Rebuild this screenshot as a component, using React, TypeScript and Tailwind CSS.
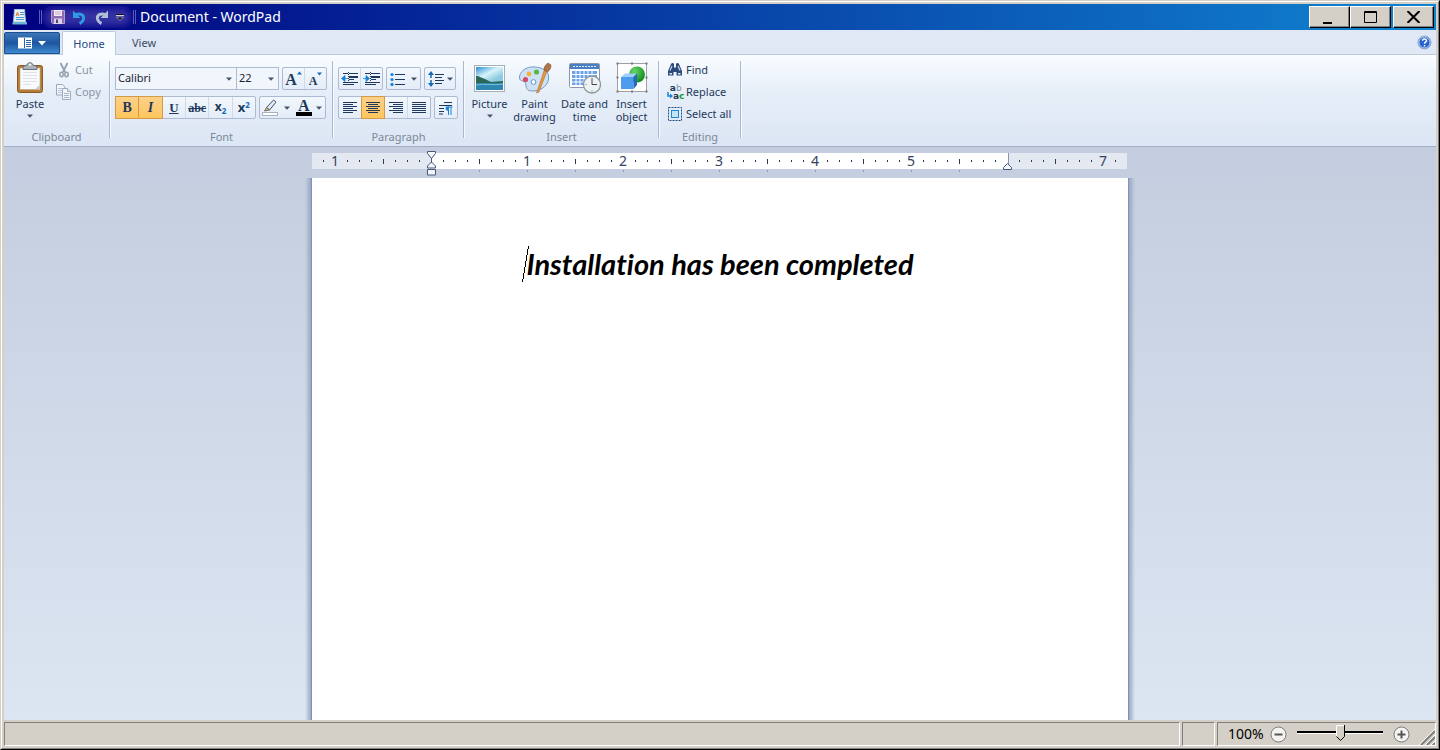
import { useState, type ReactNode } from "react";
import clsx from "clsx";

function Arrow({ className }: { className?: string }) {
  return (
    <svg width="6" height="4" viewBox="0 0 6 4" className={clsx("shrink-0", className)}>
      <path d="M0 0.5h6L3 3.8z" fill="currentColor" />
    </svg>
  );
}

function Separator() {
  return <div className="mt-1.5 h-[77px] w-0.5 shrink-0 border-l border-[#a9b8cf] bg-[#f6fafe]" />;
}

function Group({ label, className, children }: { label: string; className: string; children: ReactNode }) {
  return (
    <>
      <section aria-label={label} className={clsx("flex shrink-0 flex-col pb-px", className)}>
        <div className="h-[74px]">{children}</div>
        <div className="h-4 text-center text-[11px] leading-4 text-[#7b8799]">{label}</div>
      </section>
      <Separator />
    </>
  );
}

function ButtonBar({ className, children }: { className: string; children: ReactNode }) {
  return (
    <div
      className={clsx(
        "flex h-[23px] shrink-0 rounded-xs border border-[#acbad2] bg-linear-to-b from-[#f3f8fd] to-[#e3ecf8]",
        className,
      )}
    >
      {children}
    </div>
  );
}

function Tool({
  label,
  active,
  divided,
  className = "flex-1",
  onClick,
  children,
}: {
  label: string;
  active?: boolean;
  divided?: boolean;
  className?: string;
  onClick?: () => void;
  children: ReactNode;
}) {
  return (
    <button
      type="button"
      aria-label={label}
      aria-pressed={active}
      title={label}
      onClick={onClick}
      className={clsx(
        "flex items-center justify-center text-[#1e395b]",
        active && "-my-px border border-[#d49a45] bg-linear-to-b from-[#fcd08a] to-[#ffc65c]",
        divided && !active && "border-r border-[#cfd9e8]",
        className,
      )}
    >
      {children}
    </button>
  );
}

function LargeButton({
  icon,
  lines,
  menu,
  className,
}: {
  icon: ReactNode;
  lines: string[];
  menu?: boolean;
  className: string;
}) {
  return (
    <button type="button" className={clsx("flex flex-col items-center pt-[7px] text-[11px] leading-[13px]", className)}>
      {icon}
      <span className="mt-[3px] flex flex-col items-center whitespace-nowrap">
        {lines.map((line) => (
          <span key={line}>{line}</span>
        ))}
      </span>
      {menu ? <Arrow className="mt-1 text-[#44546a]" /> : null}
    </button>
  );
}

function SmallButton({ icon, label, disabled }: { icon: ReactNode; label: string; disabled?: boolean }) {
  return (
    <button
      type="button"
      disabled={disabled}
      className="flex h-[22px] items-center gap-[3px] text-[11px] whitespace-nowrap disabled:text-[#8a94a3]"
    >
      {icon}
      {label}
    </button>
  );
}

function AppIcon() {
  return (
    <svg width="16" height="16" viewBox="0 0 16 16" className="shrink-0">
      <path d="M2.5 0.5h10l1 12.5h-12z" fill="#e9f3fa" stroke="#9fc4dc" />
      <path d="M0.5 13h14.5v2.5H0.5z" fill="#6cb4d6" />
      <path d="M4 7l1.5-4L7 7M4.5 5.7h2" stroke="#dd7b35" fill="none" />
      <path d="M8 3.5h4M8 5.5h4M4 8.5h8M4 10.5h8" stroke="#4f97c4" />
    </svg>
  );
}

function SaveIcon() {
  return (
    <svg width="14" height="14" viewBox="0 0 14 14">
      <path d="M0.5 0.5h13v13h-12l-1-1z" fill="#8d6bb5" stroke="#b79ad2" />
      <path d="M3 0h8v6H3z" fill="#f4edf5" />
      <path d="M4 2h6M4 4h6" stroke="#c9a9c4" />
      <path d="M3 8.5h8V14H3z" fill="#dcd3ea" />
      <path d="M5 9.5h2V13H5z" fill="#4e4576" />
    </svg>
  );
}

function UndoIcon() {
  return (
    <svg width="15" height="15" viewBox="0 0 15 15">
      <path d="M2.5 5.500C7 2.500 12.500 4.500 11.500 9c-.5 2-2 3.700-4 4.500" stroke="#2f9ae6" strokeWidth="3" fill="none" />
      <path d="M1 0.500v7.500h7.500z" fill="#2f9ae6" />
    </svg>
  );
}

function RedoIcon() {
  return (
    <svg width="15" height="15" viewBox="0 0 15 15">
      <path d="M12.500 5.500C8 2.500 2.500 4.500 3.500 9c.5 2 2 3.700 4 4.500" stroke="#b3c0d6" strokeWidth="3" fill="none" />
      <path d="M14 0.500v7.500H6.500z" fill="#b3c0d6" />
    </svg>
  );
}

function PasteIcon() {
  return (
    <svg width="28" height="32" viewBox="0 0 28 32">
      <rect x="1.5" y="3.5" width="25" height="27" rx="2" fill="#b67c36" stroke="#8c5a20" />
      <path d="M4 6h20v21.5H4z" fill="#f8fafb" stroke="#b9a888" strokeWidth="0.6" />
      <path d="M7 10.5h14M7 13.5h14M7 16.5h14M7 19.5h14M7 22.5h8" stroke="#dde3e8" />
      <path d="M19 27.5l5-5v5z" fill="#c7ccd1" />
      <path d="M7 7.5V4.500l4-1.500c.5-3 5.500-3 6 0l4 1.500v3z" fill="#aab3ba" stroke="#66727c" />
      <circle cx="14" cy="2.8" r="1.2" fill="#eef2f4" />
    </svg>
  );
}

function CutIcon() {
  return (
    <svg width="16" height="16" viewBox="0 0 16 16" fill="none" stroke="#93a0b0">
      <path d="M4.5 1l4.500 9M11.500 1L7 10" strokeWidth="1.8" />
      <ellipse cx="5.5" cy="12.5" rx="1.7" ry="2.2" strokeWidth="1.5" />
      <ellipse cx="10.5" cy="12.5" rx="1.7" ry="2.2" strokeWidth="1.5" />
    </svg>
  );
}

function CopyIcon() {
  return (
    <svg width="16" height="16" viewBox="0 0 16 16" fill="#f2f6fb" stroke="#9aa9bd">
      <path d="M0.5 0.5h6l2.500 2.500v8H0.500z" />
      <path d="M2 4.5h4M2 6.5h4M2 8.5h4" stroke="#b9c5d4" />
      <path d="M6.5 4.5h5l3 3v8h-8z" />
      <path d="M11.5 4.5v3h3M8 9.5h5M8 11.5h5M8 13.5h5" stroke="#a5b3c5" />
    </svg>
  );
}

function GrowFontIcon({ shrink }: { shrink?: boolean }) {
  return (
    <span className="flex items-start">
      <span className={clsx("font-['Liberation_Serif',serif] leading-none font-bold", shrink ? "pt-1 text-xs" : "pt-0.5 text-base")}>
        A
      </span>
      <svg width="5" height="4" viewBox="0 0 5 4" className="mt-px">
        <path d={shrink ? "M0 0.5h5L2.5 3.5z" : "M0 3.5h5L2.5 0.5z"} fill="#1769b8" />
      </svg>
    </span>
  );
}

function IndentIcon({ increase }: { increase?: boolean }) {
  return (
    <svg width="17" height="14" viewBox="0 0 17 14">
      <path d="M2 1.5h5M8 1.5h9M8 4.5h9M8 7.5h5M2 10.5h5M8 10.5h9M2 12.5h5M8 12.5h5" stroke="#1e395b" />
      <path d="M8 5.5h9" stroke="#1e395b" />
      <path d="M7.5 0v14" stroke="#1e395b" strokeDasharray="1 1" />
      <path
        d={increase ? "M0 6.5h3M3 3.5l3.5 3L3 9.5z" : "M3 6.5h4M4 3.5L0.5 6.5 4 9.5z"}
        fill="#1683d8"
        stroke="#1683d8"
        strokeWidth="0.8"
      />
    </svg>
  );
}

function BulletsIcon() {
  return (
    <svg width="15" height="14" viewBox="0 0 15 14">
      <g fill="#1683d8">
        <circle cx="2" cy="2.5" r="1.6" />
        <circle cx="2" cy="7.5" r="1.6" />
        <circle cx="2" cy="12.400" r="1.6" />
      </g>
      <path d="M5 2.5h10M5 7.5h10M5 12.5h10" stroke="#1e395b" />
    </svg>
  );
}

function SpacingIcon() {
  return (
    <svg width="16" height="16" viewBox="0 0 16 16">
      <path d="M3 2v12" stroke="#1769b8" strokeWidth="1.5" strokeDasharray="5 2" />
      <path d="M0 4l3-4 3 4zM0 12l3 4 3-4z" fill="#1769b8" />
      <path d="M7 3.5h9M7 6.5h7M7 9.5h9M7 12.5h7" stroke="#1e395b" />
    </svg>
  );
}

type Align = "left" | "center" | "right" | "justify";

const ALIGN_PATHS: Record<Align, string> = {
  left: "M0 1.5h14M0 3.5h10M0 5.5h14M0 7.5h10M0 9.5h14M0 11.5h10",
  center: "M0 1.5h14M2 3.5h10M0 5.5h14M2 7.5h10M0 9.5h14M2 11.5h10",
  right: "M0 1.5h14M4 3.5h10M0 5.5h14M4 7.5h10M0 9.5h14M4 11.5h10",
  justify: "M0 1.5h14M0 3.5h14M0 5.5h14M0 7.5h14M0 9.5h14M0 11.5h14",
};

function AlignIcon({ align }: { align: Align }) {
  return (
    <svg width="14" height="13" viewBox="0 0 14 13">
      <path d={ALIGN_PATHS[align]} stroke="#1e395b" />
    </svg>
  );
}

function ParagraphIcon() {
  return (
    <svg width="14" height="14" viewBox="0 0 14 14">
      <path d="M5 1.5h8M0 4.5h13M0 7.5h5M0 10.5h5M0 13h4" stroke="#1e395b" />
      <path d="M9.5 6v8M12 6v8M6.5 6h7" stroke="#1683d8" fill="none" />
      <path d="M10 5.5C5.5 5.5 5.5 10 10 10z" fill="#1683d8" />
    </svg>
  );
}

function HighlightIcon() {
  return (
    <svg width="16" height="17" viewBox="0 0 16 17">
      <path d="M4.5 8.5L11.5 1l2.500 2.200L7.500 11z" fill="#e3e9f1" stroke="#3f5470" />
      <path d="M4.5 8.5L2.5 12l5-1z" fill="#f1c54d" stroke="#4a5568" strokeWidth="0.8" />
      <rect x="0.5" y="13.5" width="15" height="3" fill="#fff" stroke="#a7b0bf" />
    </svg>
  );
}

function FindIcon() {
  return (
    <svg width="16" height="16" viewBox="0 0 16 16">
      <path d="M4 2h3v3.500h2V2h3l3 7v4.500H9.500V10h-3v3.500H1V9z" fill="#2c4b7c" />
      <path d="M5 4L3 8.500M11 4l2 4.500" stroke="#c5d5ec" strokeWidth="1.2" />
      <path d="M2.500 11h2.500v1.500H2.500zM11 11h2.500v1.500H11z" fill="#dfe9f6" />
      <path d="M4.500 1.500h2M9.500 1.500h2" stroke="#2c4b7c" />
    </svg>
  );
}

function ReplaceIcon() {
  return (
    <span className="grid h-4 w-4 font-['DejaVu_Sans',sans-serif] text-[9px] leading-2 font-bold">
      <span className="text-[#1e395b]">
        a<span className="font-normal text-[#8090a5]">b</span>
      </span>
      <span className="flex">
        <svg width="6" height="8" viewBox="0 0 6 8" className="shrink-0">
          <path d="M1 0v4h2" stroke="#1683d8" fill="none" strokeWidth="1.5" />
          <path d="M3 1.5L6 4 3 6.500z" fill="#1683d8" />
        </svg>
        <span className="text-[#1e395b]">a</span>
        <span className="text-[#169a35]">c</span>
      </span>
    </span>
  );
}

function SelectAllIcon() {
  return (
    <svg width="16" height="16" viewBox="0 0 16 16">
      <rect x="1.5" y="1.5" width="13" height="13" fill="none" stroke="#1e4b7b" strokeDasharray="2 1" />
      <rect x="4.5" y="4.5" width="7" height="7" fill="#bfe5fb" stroke="#2586d0" />
    </svg>
  );
}

function PictureIcon() {
  return (
    <svg width="32" height="32" viewBox="0 0 32 32">
      <defs>
        <linearGradient id="sky" x1="0" y1="0" x2="0.6" y2="1">
          <stop offset="0" stopColor="#2a8fd2" />
          <stop offset="0.4" stopColor="#d8f3fb" />
          <stop offset="0.7" stopColor="#8fcbe0" />
        </linearGradient>
      </defs>
      <rect x="0.5" y="3.5" width="30" height="26" fill="#fff" stroke="#a6aeb8" />
      <rect x="2" y="5" width="27" height="23" fill="url(#sky)" />
      <path d="M2 14c4 0 5 2 9 3l6 3 12-1v3H2z" fill="#2c6656" />
      <path d="M2 21h27v7H2z" fill="#2f86b0" />
      <path d="M2 23c8-2 18 1 27-1" stroke="#72c1d8" fill="none" />
    </svg>
  );
}

function PaintIcon() {
  return (
    <svg width="34" height="32" viewBox="0 0 34 32">
      <path
        d="M17 5C8 4 1 10 1.5 16c.3 4 5 2 6 5 1 4 0 8 7 8 10 0 17-7 16-15-.5-5-6-8.5-13.500-9z"
        fill="#cfe2f5"
        stroke="#6f9ccb"
      />
      <circle cx="7.5" cy="17.5" r="2.6" fill="#d54b62" />
      <circle cx="11" cy="12" r="2.4" fill="#efb43c" />
      <circle cx="18.5" cy="10" r="2.6" fill="#58b547" />
      <circle cx="15.5" cy="20" r="2.4" fill="#fff" stroke="#5a94d0" />
      <path d="M27 6l2.500 1.500L21 30l-2.500 1z" fill="#e39a41" stroke="#b36c22" strokeWidth="0.6" />
      <path d="M26 8c0-3 1-5 4-7l3 2c0 3-1 5-3.500 7z" fill="#ad7549" stroke="#7e4f2c" strokeWidth="0.6" />
    </svg>
  );
}

function DateIcon() {
  return (
    <svg width="32" height="32" viewBox="0 0 32 32">
      <rect x="0.5" y="1.5" width="30" height="24" rx="1" fill="#fff" stroke="#8b98a8" />
      <path d="M1 2h29v5H1z" fill="#4a80c2" />
      <path d="M4 4.5h23" stroke="#dcebfa" strokeDasharray="2 1" />
      <path d="M3 9h25v14H3z" fill="#6ba3ea" />
      <path d="M3 12.5h25M3 16.5h25M3 20h25M7 9v14M11 9v14M15 9v14M19 9v14M23 9v14" stroke="#fff" />
      <circle cx="23" cy="22.5" r="8.5" fill="#eff2f4" stroke="#8d959d" strokeWidth="1.3" />
      <path d="M23 16.5v6h5" stroke="#3c4650" fill="none" />
      <path d="M23 15.500v1M23 28.500v1M16.500 22.500h1" stroke="#6d7780" />
    </svg>
  );
}

function ObjectIcon() {
  return (
    <svg width="32" height="32" viewBox="0 0 32 32">
      <defs>
        <radialGradient id="ball" cx="0.35" cy="0.3" r="0.8">
          <stop offset="0" stopColor="#68d569" />
          <stop offset="1" stopColor="#078516" />
        </radialGradient>
      </defs>
      <rect x="1.5" y="1.5" width="29" height="28" fill="#fff" stroke="#a0a0a0" />
      <circle cx="21" cy="12.5" r="8" fill="url(#ball)" />
      <path d="M5 15l4-3.500h12L17.500 15z" fill="#9ccffb" />
      <path d="M5 15h12.500v12H5z" fill="#4d9bed" />
      <path d="M17.5 15l3.500-3.500V23l-3.500 4z" fill="#2769be" />
      <path
        d="M0.500 0.500h2v2h-2zM15 0.500h2v2h-2zM29.500 0.500h2v2h-2zM0.500 14.500h2v2h-2zM29.500 14.500h2v2h-2zM0.500 28.500h2v2h-2zM15 28.500h2v2h-2zM29.500 28.500h2v2h-2z"
        fill="#777"
      />
    </svg>
  );
}

function CaptionButton({ label, children }: { label: string; children: ReactNode }) {
  return (
    <button
      type="button"
      aria-label={label}
      className="flex h-[22px] w-[41px] items-center justify-center border border-t-white border-r-black border-b-black border-l-white bg-[#d4d0c8] shadow-[inset_-1px_-1px_0_#808080]"
    >
      {children}
    </button>
  );
}

function TitleBar() {
  return (
    <header className="flex h-[26px] items-center bg-linear-to-r/srgb from-[#000080] to-[#1084d0] pr-0.5 pl-2 text-white">
      <AppIcon />
      <div className="ml-[11px] h-3.5 w-[3px] border-x border-[#5a5ab8]" />
      <div className="flex h-[22px] items-center gap-[7px] rounded-full bg-[#6a5cc0]/50 px-[9px] shadow-[inset_0_0_6px_3px_#0a0a8c]">
        <button type="button" aria-label="Save">
          <SaveIcon />
        </button>
        <button type="button" aria-label="Undo">
          <UndoIcon />
        </button>
        <button type="button" aria-label="Redo">
          <RedoIcon />
        </button>
        <button type="button" aria-label="Customize Quick Access Toolbar">
          <svg width="8" height="8" viewBox="0 0 8 8">
            <path d="M0 1.5h8" stroke="#111" />
            <path d="M0 2.5h8" stroke="#cfcfe8" />
            <path d="M0.5 4h7L4 7.500z" fill="#111" stroke="#cfcfe8" strokeWidth="0.6" />
          </svg>
        </button>
      </div>
      <div className="h-3.5 w-[3px] border-x border-[#5a5ab8]" />
      <h1 className="ml-1 flex-1 text-sm">Document - WordPad</h1>
      <div className="flex">
        <CaptionButton label="Minimize">
          <svg width="14" height="14" viewBox="0 0 14 14">
            <path d="M0 13h9" stroke="#000" strokeWidth="2" />
          </svg>
        </CaptionButton>
        <CaptionButton label="Maximize">
          <svg width="13" height="12" viewBox="0 0 13 12">
            <path d="M0.5 0.5h12v11H0.500zM0 1.5h13" stroke="#000" fill="none" />
          </svg>
        </CaptionButton>
      </div>
      <div className="ml-0.5">
        <CaptionButton label="Close">
          <svg width="13" height="12" viewBox="0 0 13 12">
            <path d="M0.5 0l12 12M12.5 0l-12 12" stroke="#000" strokeWidth="2" />
          </svg>
        </CaptionButton>
      </div>
    </header>
  );
}

function TabRow() {
  return (
    <nav className="flex h-[25px] items-end border-b border-[#bccadc] bg-[#dfe8f4] text-[11px]">
      <button
        type="button"
        aria-label="WordPad menu"
        className="flex h-[22px] w-14 items-center justify-center gap-1.5 rounded-t-xs border border-[#1c4f91] bg-linear-to-b from-[#3c76b8] via-[#1d569f] to-[#3f8ad0] text-white"
      >
        <svg width="14" height="12" viewBox="0 0 14 12">
          <path d="M0 0.5h14v11H0z" fill="#fff" />
          <path d="M6.500 1v10M8 3.5h5M8 5.5h5M8 7.5h5M8 9.5h5" stroke="#2b62a5" />
        </svg>
        <svg width="8" height="5" viewBox="0 0 8 5">
          <path d="M0 0h8L4 4.500z" fill="#fff" />
        </svg>
      </button>
      <button
        type="button"
        className="-mb-px ml-0.5 h-6 w-[54px] rounded-t-xs border border-b-0 border-[#bccadc] bg-[#fafdff] pt-px text-[#1e4a86]"
      >
        Home
      </button>
      <button type="button" className="h-[22px] w-14 pt-px text-[#3a4c66]">
        View
      </button>
      <button type="button" aria-label="Help" className="mr-1 mb-1 ml-auto">
        <svg width="15" height="15" viewBox="0 0 15 15">
          <circle cx="7.5" cy="7.5" r="6.5" fill="#2763cf" stroke="#8fa6d0" />
          <circle cx="7.5" cy="7.5" r="5.5" fill="none" stroke="#e6efff" strokeWidth="0.8" />
          <path d="M5.500 5.800c.2-2.400 4.200-2.200 4 0-.2 1.400-2 1.400-2 3M7.500 10v1.500" stroke="#fff" strokeWidth="1.5" fill="none" />
        </svg>
      </button>
    </nav>
  );
}

function Combo({ label, options, className }: { label: string; options: string[]; className: string }) {
  return (
    <div className={clsx("relative", className)}>
      <select
        aria-label={label}
        className="block h-[23px] w-full appearance-none border border-[#acbad2] bg-[#f1f6fc] px-0.5 text-[11px] text-[#1b2230] outline-none"
      >
        {options.map((o) => (
          <option key={o}>{o}</option>
        ))}
      </select>
      <Arrow className="pointer-events-none absolute top-2.5 right-[5px] text-[#44546a]" />
    </div>
  );
}

function Ribbon({ align, setAlign }: { align: Align; setAlign: (a: Align) => void }) {
  return (
    <div className="flex border-b border-[#9fb0c6] bg-linear-to-b from-[#f9fdff] via-[#e6eef8] via-40% to-[#dce6f4] text-[#1e395b]">
      <Group label="Clipboard" className="w-[105px]">
        <div className="flex">
          <LargeButton icon={<PasteIcon />} lines={["Paste"]} menu className="w-[52px]" />
          <div className="pt-1">
            <SmallButton icon={<CutIcon />} label="Cut" disabled />
            <SmallButton icon={<CopyIcon />} label="Copy" disabled />
          </div>
        </div>
      </Group>

      <Group label="Font" className="w-[221px]">
        <div className="flex flex-col gap-1.5 pt-3 pl-1">
          <div className="flex gap-[3px]">
            <div className="flex">
              <Combo label="Font family" options={["Calibri", "Arial", "Segoe UI"]} className="w-[122px]" />
              <Combo label="Font size" options={["22", "11", "12", "14", "24"]} className="-ml-px w-[43px]" />
            </div>
            <ButtonBar className="w-[45px]">
              <Tool label="Grow font" divided>
                <GrowFontIcon />
              </Tool>
              <Tool label="Shrink font">
                <GrowFontIcon shrink />
              </Tool>
            </ButtonBar>
          </div>
          <div className="flex gap-[3px]">
            <ButtonBar className="w-[141px]">
              <Tool label="Bold" active className="-ml-px flex-1">
                <span className="font-['Liberation_Serif',serif] text-sm font-bold">B</span>
              </Tool>
              <Tool label="Italic" active className="-ml-px flex-1">
                <span className="font-['Liberation_Serif',serif] text-sm font-bold italic">I</span>
              </Tool>
              <Tool label="Underline" divided>
                <span className="font-['Liberation_Serif',serif] text-[13px] leading-none font-bold underline">U</span>
              </Tool>
              <Tool label="Strikethrough" divided>
                <span className="font-['Liberation_Serif',serif] text-xs font-bold line-through">abc</span>
              </Tool>
              <Tool label="Subscript" divided>
                <span className="flex text-xs leading-none font-bold">
                  x<span className="pt-1.5 text-[8px] leading-none text-[#1769b8]">2</span>
                </span>
              </Tool>
              <Tool label="Superscript">
                <span className="flex text-[13px] leading-none font-bold">
                  x<span className="text-[8px] leading-none text-[#1769b8]">2</span>
                </span>
              </Tool>
            </ButtonBar>
            <ButtonBar className="w-[67px]">
              <Tool label="Text highlight color" className="flex-1 gap-1.5">
                <HighlightIcon />
                <Arrow className="text-[#44546a]" />
              </Tool>
              <Tool label="Text color" className="flex-1 gap-1">
                <span className="flex w-4 flex-col items-center border-b-4 border-black font-['Liberation_Serif',serif] text-base leading-[13px] font-bold">
                  A
                </span>
                <Arrow className="text-[#44546a]" />
              </Tool>
            </ButtonBar>
          </div>
        </div>
      </Group>

      <Group label="Paragraph" className="w-[129px]">
        <div className="flex flex-col gap-1.5 pt-3 pl-1">
          <div className="flex gap-[3px]">
            <ButtonBar className="w-[45px]">
              <Tool label="Decrease indent" divided>
                <IndentIcon />
              </Tool>
              <Tool label="Increase indent">
                <IndentIcon increase />
              </Tool>
            </ButtonBar>
            <ButtonBar className="w-[35px]">
              <Tool label="Start a list" className="flex-1 gap-1.5">
                <BulletsIcon />
                <Arrow className="text-[#44546a]" />
              </Tool>
            </ButtonBar>
            <ButtonBar className="w-8">
              <Tool label="Line spacing" className="flex-1 gap-[3px]">
                <SpacingIcon />
                <Arrow className="text-[#44546a]" />
              </Tool>
            </ButtonBar>
          </div>
          <div className="flex gap-[3px]">
            <ButtonBar className="w-[93px]">
              {(Object.keys(ALIGN_PATHS) as Align[]).map((key) => (
                <Tool
                  key={key}
                  label={`Align ${key}`}
                  active={align === key}
                  divided={key === "right"}
                  onClick={() => setAlign(key)}
                >
                  <AlignIcon align={key} />
                </Tool>
              ))}
            </ButtonBar>
            <ButtonBar className="w-6">
              <Tool label="Paragraph">
                <ParagraphIcon />
              </Tool>
            </ButtonBar>
          </div>
        </div>
      </Group>

      <Group label="Insert" className="w-[193px]">
        <div className="flex items-start pl-[3px]">
          <LargeButton icon={<PictureIcon />} lines={["Picture"]} menu className="w-[43px]" />
          <LargeButton icon={<PaintIcon />} lines={["Paint", "drawing"]} className="w-[47px]" />
          <LargeButton icon={<DateIcon />} lines={["Date and", "time"]} className="w-[53px]" />
          <LargeButton icon={<ObjectIcon />} lines={["Insert", "object"]} className="w-[41px]" />
        </div>
      </Group>

      <Group label="Editing" className="w-20">
        <div className="pt-1 pl-[7px]">
          <SmallButton icon={<FindIcon />} label="Find" />
          <SmallButton icon={<ReplaceIcon />} label="Replace" />
          <SmallButton icon={<SelectAllIcon />} label="Select all" />
        </div>
      </Group>
    </div>
  );
}

const TICKS = Array.from({ length: 67 }, (_, i) => i - 9);

function Tick({ at }: { at: number }) {
  // at counts eighths of an inch from the left margin
  if (at === 0 || at === 48) return <div className="w-3" />;
  if (at % 8 === 0) return <div className="w-3 text-center">{Math.abs(at / 8)}</div>;
  return (
    <div className="flex w-3 items-center justify-center">
      <div className={clsx("w-px bg-[#2c3b55]", at % 4 === 0 ? "h-[5px]" : "h-0.5")} />
    </div>
  );
}

function Ruler() {
  return (
    <div className="flex w-[816px] shrink-0 flex-col pt-1.5 pr-px">
      <div className="relative flex h-4 bg-linear-to-r from-[#e4e8f1] from-[119px] via-white via-[119px] to-white pl-[5px] text-sm leading-4 text-[#33425f]">
        <div className="absolute inset-y-0 right-0 w-[119px] border-l border-[#8a98ae] bg-[#e4e8f1]" />
        <div className="relative flex">
          {TICKS.map((at) => (
            <Tick key={at} at={at} />
          ))}
        </div>
        <svg
          width="9"
          height="25"
          viewBox="0 0 9 25"
          className="absolute -top-0.5 left-[115px]"
          fill="#f3f6fb"
          stroke="#46587a"
        >
          <path d="M0.5 0.5h8v2l-4 5-4-5zM4.500 7v5M4.500 11l4 4v2h-8v-2z" />
          <path d="M0.5 18.5h8v5.500h-8z" />
        </svg>
        <svg
          width="9"
          height="7"
          viewBox="0 0 9 7"
          className="absolute right-[115px] -bottom-px"
          fill="#f3f6fb"
          stroke="#46587a"
        >
          <path d="M4.500 0.500l4 4v2h-8v-2z" />
        </svg>
      </div>
      <div className="flex h-[9px] gap-[47px] pt-px pl-[167px]">
        {Array.from({ length: 11 }, (_, i) => (
          <div key={i} className="h-0.5 w-px bg-[#8a9cb5]" />
        ))}
      </div>
    </div>
  );
}

const ALIGN_CLASSES: Record<Align, string> = {
  left: "text-left",
  center: "text-center",
  right: "text-right",
  justify: "text-justify",
};

function Editor({ align }: { align: Align }) {
  return (
    <main className="flex flex-1 flex-col items-center bg-linear-to-b from-[#c3cddf] to-[#dce6f2]">
      <Ruler />
      <div className="flex flex-1">
        <div className="w-[7px] border-r border-[#8492b0] bg-linear-to-r from-[#98a7c4]/0 to-[#98a7c4]" />
        <article className={clsx("w-[816px] bg-white px-[119px] pt-[66px]", ALIGN_CLASSES[align])}>
          <p className="relative inline-block font-[Lato,sans-serif] text-[29px] leading-10 font-bold text-black italic [font-variant-ligatures:none]">
            <svg width="7" height="36" viewBox="0 0 7 36" className="absolute top-0.5 -left-1">
              <path d="M0.5 36L6.5 0" stroke="#000" shapeRendering="crispEdges" />
            </svg>
            Installation has been completed
          </p>
        </article>
        <div className="w-[7px] border-l border-[#8492b0] bg-linear-to-l from-[#98a7c4]/0 to-[#98a7c4]" />
      </div>
    </main>
  );
}

function StatusBar({ zoom, setZoom }: { zoom: number; setZoom: (z: number) => void }) {
  const cell = "border border-t-[#808080] border-r-white border-b-white border-l-[#808080]";
  return (
    <footer className="flex h-[26px] gap-0.5 bg-[#d4d0c8] pt-0.5 text-black">
      <div className={clsx("flex-1", cell)} />
      <div className={clsx("w-[33px]", cell)} />
      <div className={clsx("flex w-[219px] items-center pl-2.5", cell)}>
        <output className="w-[42px] text-sm">{zoom}%</output>
        <button type="button" aria-label="Zoom out" onClick={() => setZoom(Math.max(10, zoom - 10))}>
          <svg width="17" height="17" viewBox="0 0 17 17">
            <circle cx="8.5" cy="8.5" r="7.5" fill="#f5f4f2" stroke="#77787a" />
            <path d="M4.500 8.500h8" stroke="#555" strokeWidth="2" />
          </svg>
        </button>
        <div className="relative mx-2.5 h-5 w-[86px]">
          <div className="mt-[7px] h-[3px] w-full border-t-2 border-b border-t-black border-b-white" />
          <svg
            width="9"
            height="16"
            viewBox="0 0 9 16"
            className="absolute top-px -ml-1"
            style={{ left: `${zoom / 2}%` }}
          >
            <path d="M0 0h9v11.500L4.500 16 0 11.500z" fill="#d4d0c8" />
            <path d="M0.5 11.500V0.500h8" stroke="#fff" fill="none" />
            <path d="M8.5 0v11.500l-4 4-4-4" stroke="#000" fill="none" />
          </svg>
          <input
            type="range"
            aria-label="Zoom"
            min={0}
            max={200}
            value={zoom}
            onChange={(e) => setZoom(Number(e.target.value))}
            className="absolute inset-0 h-full w-full opacity-0"
          />
        </div>
        <button type="button" aria-label="Zoom in" onClick={() => setZoom(Math.min(200, zoom + 10))}>
          <svg width="17" height="17" viewBox="0 0 17 17">
            <circle cx="8.5" cy="8.5" r="7.5" fill="#f5f4f2" stroke="#77787a" />
            <path d="M4.500 8.500h8M8.500 4.500v8" stroke="#555" strokeWidth="2" />
          </svg>
        </button>
        <svg width="17" height="17" viewBox="0 0 17 17" className="ml-auto self-end">
          <path d="M1 17L17 1M7 17L17 7M13 17l4-4" stroke="#fff" />
          <path d="M3 17L17 3M9 17l8-8M15 17l2-2" stroke="#808080" strokeWidth="2" />
        </svg>
      </div>
    </footer>
  );
}

export default function App() {
  const [align, setAlign] = useState<Align>("center");
  const [zoom, setZoom] = useState(100);

  return (
    <div className="flex min-h-screen flex-col border border-t-[#d4d0c8] border-r-black border-b-black border-l-[#d4d0c8] bg-[#d4d0c8] font-['Noto_Sans','Open_Sans',sans-serif]">
      <div className="flex flex-1 flex-col border border-t-white border-r-[#808080] border-b-[#808080] border-l-white p-0.5">
        <TitleBar />
        <TabRow />
        <Ribbon align={align} setAlign={setAlign} />
        <Editor align={align} />
        <StatusBar zoom={zoom} setZoom={setZoom} />
      </div>
    </div>
  );
}
